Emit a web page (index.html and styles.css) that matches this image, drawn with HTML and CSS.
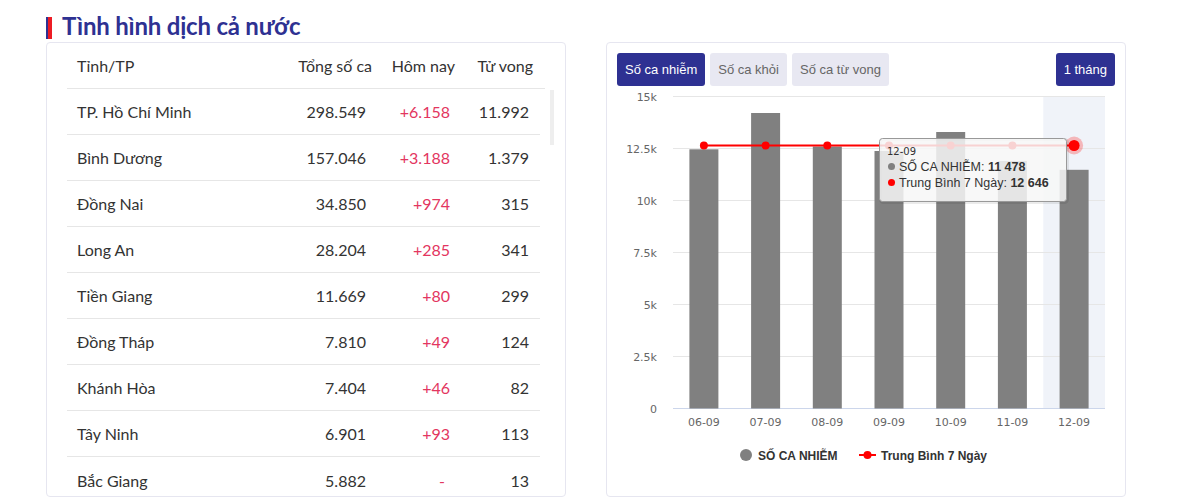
FILE: index.html
```html
<!DOCTYPE html>
<html lang="vi">
<head>
<meta charset="utf-8">
<title>Tình hình dịch cả nước</title>
<link rel="stylesheet" href="styles.css">
</head>
<body>
<div class="page">
  <div class="title-row">
    <span class="stripe"><span class="stripe-blue"></span><span class="stripe-red"></span></span>
    <h2 class="title">Tình hình dịch cả nước</h2>
  </div>
  <div class="cards">
    <div class="card table-card">
      <div class="thead">
        <div class="cell name">Tỉnh/TP</div>
        <div class="cell num">Tổng số ca</div>
        <div class="cell num">Hôm nay</div>
        <div class="cell num">Tử vong</div>
      </div>
      <div class="tbody-wrap">
        <div class="tbody">
          <div class="row"><div class="cell name">TP. Hồ Chí Minh</div><div class="cell num">298.549</div><div class="cell num red">+6.158</div><div class="cell num">11.992</div></div>
          <div class="row"><div class="cell name">Bình Dương</div><div class="cell num">157.046</div><div class="cell num red">+3.188</div><div class="cell num">1.379</div></div>
          <div class="row"><div class="cell name">Đồng Nai</div><div class="cell num">34.850</div><div class="cell num red">+974</div><div class="cell num">315</div></div>
          <div class="row"><div class="cell name">Long An</div><div class="cell num">28.204</div><div class="cell num red">+285</div><div class="cell num">341</div></div>
          <div class="row"><div class="cell name">Tiền Giang</div><div class="cell num">11.669</div><div class="cell num red">+80</div><div class="cell num">299</div></div>
          <div class="row"><div class="cell name">Đồng Tháp</div><div class="cell num">7.810</div><div class="cell num red">+49</div><div class="cell num">124</div></div>
          <div class="row"><div class="cell name">Khánh Hòa</div><div class="cell num">7.404</div><div class="cell num red">+46</div><div class="cell num">82</div></div>
          <div class="row"><div class="cell name">Tây Ninh</div><div class="cell num">6.901</div><div class="cell num red">+93</div><div class="cell num">113</div></div>
          <div class="row last"><div class="cell name">Bắc Giang</div><div class="cell num">5.882</div><div class="cell num red dash">-</div><div class="cell num">13</div></div>
        </div>
        <div class="scroll-track"><div class="scroll-thumb"></div></div>
      </div>
    </div>

    <div class="card chart-card">
      <div class="btn-row">
        <button class="btn active">Số ca nhiễm</button>
        <button class="btn">Số ca khỏi</button>
        <button class="btn">Số ca từ vong</button>
        <button class="btn active push">1 tháng</button>
      </div>
      <svg class="chart" width="518" height="409" viewBox="0 0 518 409" xmlns="http://www.w3.org/2000/svg">
        <rect x="436.3" y="10.5" width="61.7" height="312" fill="#f0f3f9"/>
        <g stroke="#e6e6e6" stroke-width="1">
          <line x1="66" y1="10.5" x2="498" y2="10.5"/>
          <line x1="66" y1="62.5" x2="498" y2="62.5"/>
          <line x1="66" y1="114.5" x2="498" y2="114.5"/>
          <line x1="66" y1="166.5" x2="498" y2="166.5"/>
          <line x1="66" y1="218.5" x2="498" y2="218.5"/>
          <line x1="66" y1="270.5" x2="498" y2="270.5"/>
        </g>
        <line x1="66" y1="322.5" x2="498" y2="322.5" stroke="#ccd6eb" stroke-width="1"/>
        <g class="axis-label" text-anchor="end">
          <text x="50" y="14.5">15k</text>
          <text x="50" y="66.5">12.5k</text>
          <text x="50" y="118.5">10k</text>
          <text x="50" y="170.5">7.5k</text>
          <text x="50" y="222.5">5k</text>
          <text x="50" y="274.5">2.5k</text>
          <text x="50" y="326.5">0</text>
        </g>
        <g fill="#808080">
          <rect x="82.4" y="63.3" width="29" height="259.2"/>
          <rect x="144.1" y="27" width="29" height="295.5"/>
          <rect x="205.8" y="60.5" width="29" height="262"/>
          <rect x="267.5" y="65" width="29" height="257.5"/>
          <rect x="329.2" y="46" width="29" height="276.5"/>
          <rect x="390.9" y="75" width="29" height="247.5"/>
          <rect x="452.6" y="83.8" width="29" height="238.7"/>
        </g>
        <g class="axis-label" text-anchor="middle">
          <text x="96.9" y="340">06-09</text>
          <text x="158.6" y="340">07-09</text>
          <text x="220.3" y="340">08-09</text>
          <text x="282" y="340">09-09</text>
          <text x="343.7" y="340">10-09</text>
          <text x="405.4" y="340">11-09</text>
          <text x="467.1" y="340">12-09</text>
        </g>
        <polyline points="96.9,59.5 158.6,59.5 220.3,59.5 282,59.5 343.7,59.5 405.4,59.5 467.1,59.5" fill="none" stroke="#ff0000" stroke-width="2"/>
        <g fill="#ff0000">
          <circle cx="96.9" cy="59.5" r="4"/>
          <circle cx="158.6" cy="59.5" r="4"/>
          <circle cx="220.3" cy="59.5" r="4"/>
          <circle cx="282" cy="59.5" r="4"/>
          <circle cx="343.7" cy="59.5" r="4"/>
          <circle cx="405.4" cy="59.5" r="4"/>
        </g>
        <circle cx="467.1" cy="59.5" r="9" fill="#ff0000" fill-opacity="0.25"/>
        <circle cx="467.1" cy="59.5" r="5.5" fill="#ff0000"/>
        <rect x="273.5" y="53.5" width="187" height="63" rx="3" fill="none" stroke="#000" stroke-opacity="0.08" stroke-width="3"/>
        <rect x="272.5" y="52.5" width="187" height="63" rx="3" fill="#f7f7f7" fill-opacity="0.85" stroke="#999999" stroke-width="1"/>
        <text class="tip-date" x="280" y="69">12-09</text>
        <circle cx="284.5" cy="80.5" r="3.5" fill="#808080"/>
        <text class="tip-text" x="292" y="85">SỐ CA NHIỄM: <tspan class="tip-bold">11 478</tspan></text>
        <circle cx="284.5" cy="96.5" r="3.5" fill="#ff0000"/>
        <text class="tip-text" x="292" y="101">Trung Bình 7 Ngày: <tspan class="tip-bold">12 646</tspan></text>
        <circle cx="139" cy="369" r="6" fill="#808080"/>
        <text class="legend" x="151" y="373.5">SỐ CA NHIỄM</text>
        <line x1="252" y1="369" x2="269" y2="369" stroke="#ff0000" stroke-width="2"/>
        <circle cx="260.5" cy="369" r="4" fill="#ff0000"/>
        <text class="legend" x="274" y="373.5">Trung Bình 7 Ngày</text>
      </svg>
    </div>
  </div>
</div>
</body>
</html>
```
FILE: styles.css
```css
* { box-sizing: border-box; }
html, body { margin: 0; padding: 0; background: #ffffff; }
body { font-family: "Lato", "Liberation Sans", sans-serif; color: #333333; }

.page { padding: 13px 0 0 46px; }

.title-row { display: flex; align-items: flex-start; gap: 10px; margin-bottom: 3px; height: 26px; }
.stripe { display: flex; margin-top: 4px; height: 22px; }
.stripe-blue { width: 2px; background: #2e3192; }
.stripe-red { width: 4px; background: #ed1c24; }
.title { margin: 0; font-size: 24px; line-height: 26px; font-weight: 700; color: #2e3192; font-family: "Lato", sans-serif; letter-spacing: -0.2px; }

.cards { display: flex; gap: 40px; }
.card { width: 520px; height: 455px; border: 1px solid #e6e6f0; border-radius: 4px; background: #fff; overflow: hidden; flex-shrink: 0; }

.table-card { padding: 0 10px 0 20px; display: flex; flex-direction: column; }
.thead { display: grid; grid-template-columns: 1fr 100px 83px 78px; padding: 0 12px 0 10px; width: 478px; height: 46px; border-bottom: 1px solid #e6e6e6; align-items: center; font-size: 16px; flex-shrink: 0; }
.tbody-wrap { display: flex; gap: 10px; flex: 1; overflow: hidden; }
.tbody { width: 473px; flex-shrink: 0; }
.row { display: grid; grid-template-columns: 1fr 100px 84px 79px; padding: 0 11px 0 10px; height: 46px; border-bottom: 1px solid #e6e6e6; align-items: center; font-size: 16px; }
.row.last { border-bottom: none; }
.cell { white-space: nowrap; }
.num { text-align: right; }
.red { color: #e3365f; }
.dash { padding-right: 5px; }
.scroll-track { width: 4px; flex-shrink: 0; }
.scroll-thumb { width: 4px; height: 55px; background: #eeeeee; margin-top: 1px; }

.chart-card { display: flex; flex-direction: column; }
.btn-row { display: flex; gap: 5px; padding: 10px 10px 0 10px; height: 43px; flex-shrink: 0; }
.btn { font-family: "Liberation Sans", Arial, sans-serif; font-size: 13px; height: 33px; padding: 0 8px; border: none; border-radius: 3px; background: #e8e8f2; color: #666666; }
.btn.active { background: #2e3192; color: #ffffff; }
.btn.push { margin-left: auto; }

.chart { display: block; }
.axis-label { font-family: "DejaVu Sans", Verdana, sans-serif; font-size: 11px; fill: #666666; }
.tip-date { font-family: "DejaVu Sans", Verdana, sans-serif; font-size: 10px; fill: #333333; }
.tip-text { font-family: "Liberation Sans", Arial, sans-serif; font-size: 12.5px; fill: #333333; }
.tip-bold { font-weight: 700; }
.legend { font-family: "Liberation Sans", Arial, sans-serif; font-size: 12px; font-weight: 700; fill: #333333; }
```
